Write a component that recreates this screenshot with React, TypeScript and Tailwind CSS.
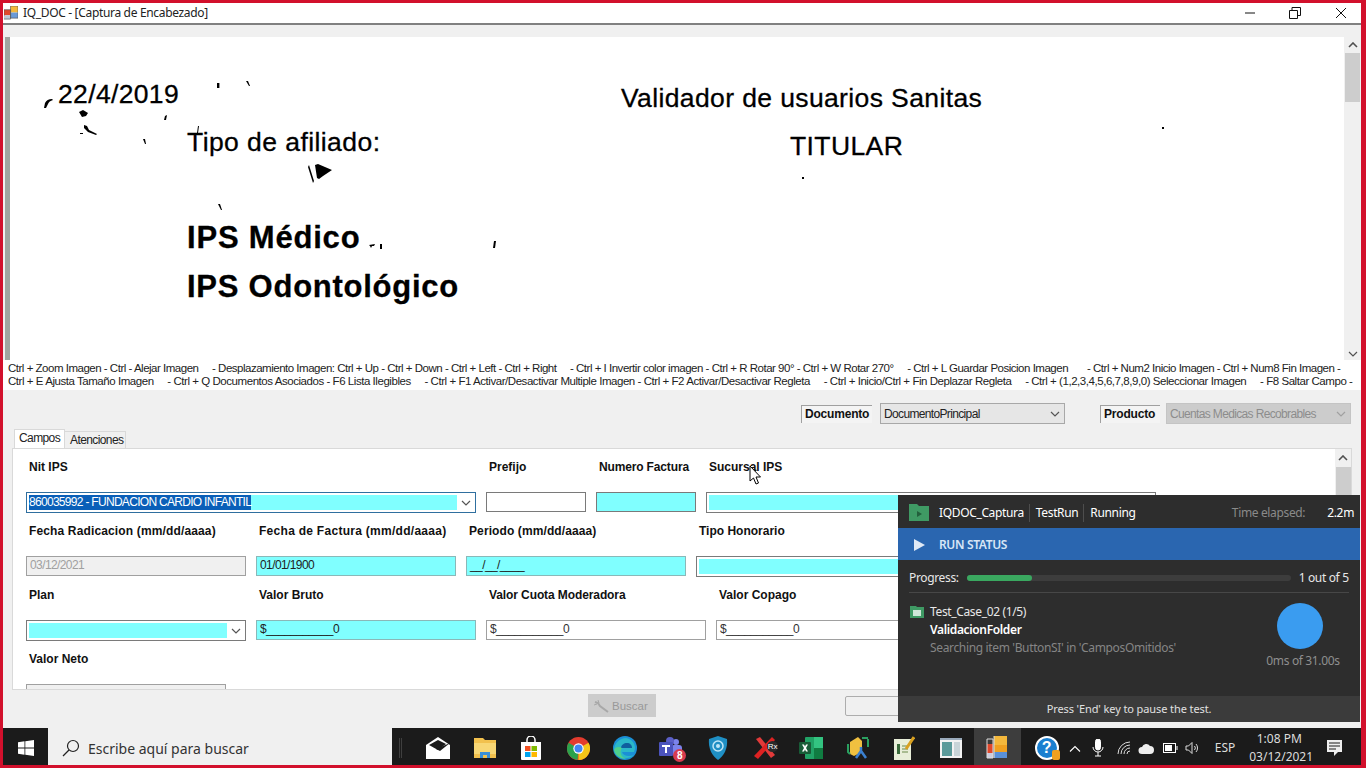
import React from "react";

const sans = "font-['Liberation_Sans',Arial,sans-serif]";

function Label({ w, track = "", children }: { w: string; track?: string; children: React.ReactNode }) {
  return <div className={`${w} ${track} shrink-0 pl-[3px] text-[12px] font-bold leading-[14px] text-[#111]`}>{children}</div>;
}

function Field({ w, cyan, gray, border = "border-[#7a7a7a]", children }: { w: string; cyan?: boolean; gray?: boolean; border?: string; children?: React.ReactNode }) {
  return (
    <div
      className={`${w} h-[20px] shrink-0 border ${border} pl-[3px] text-[12px] leading-[17px] tracking-[-0.6px] whitespace-pre ${
        cyan ? "bg-[#80ffff] text-[#222]" : gray ? "bg-[#f0f0f0] text-[#a0a0a0]" : "bg-white text-[#333]"
      }`}
    >
      {children}
    </div>
  );
}

function Chevron({ color = "#555" }: { color?: string }) {
  return (
    <svg width="10" height="6" viewBox="0 0 10 6" fill="none" stroke={color} strokeWidth="1.2">
      <path d="M1 1l4 4 4-4" />
    </svg>
  );
}

function ComboCyan({ w, fill, border, children }: { w: string; fill: string; border: string; children?: React.ReactNode }) {
  return (
    <div className={`${w} h-[21px] shrink-0 border ${border} flex items-center bg-white pl-[2px]`}>
      <div className={`${fill} h-[15px] bg-[#80ffff] text-[12px] leading-[15px] tracking-[-0.7px] whitespace-pre`}>{children}</div>
      <div className="flex flex-1 justify-center">
        <Chevron />
      </div>
    </div>
  );
}

function TaskIcon({ active, children }: { active?: boolean; children: React.ReactNode }) {
  return <div className={`flex h-full w-[46.6px] shrink-0 items-center justify-center pt-[3px] ${active ? "bg-[#3d3d3d]" : ""}`}>{children}</div>;
}

function Specks() {
  // marcas de ruido del documento escaneado (x absoluta, y - 37)
  return (
    <svg className="absolute left-[-10px] top-0" width="1200" height="260" viewBox="0 0 1200 260" fill="#000">
      <path d="M44 71l1-5q2-4 7-4l1 1q-4 1-5 4l-2 4z" />
      <path d="M79 75l4-2 5 3-2 3-4 1z" />
      <path d="M84 88l3 1 2 4 8 4-1 1-8-3-4-4zM80 96h3v1h-3z" />
      <rect x="217" y="46" width="2.4" height="5" />
      <path d="M246 44l2 0 2 5-1 0z" />
      <path d="M165 79l2-1-1 5h-2z" />
      <path d="M143 102l2 0 1 5-1 0z" />
      <path d="M197 96l1-7 1 0-1 7z" />
      <path d="M308 130l1-2 5 16-1 2z" />
      <path d="M315 128l3-1 14 6-9 6-4 3-2-1z" />
      <path d="M218 167l2 0 2 6-1 0z" />
      <path d="M369 208l6-1-1 2-2 0-1 2-1-2zM380 207h2v5h-2z" />
      <path d="M494 204l2 0-1 7h-2z" />
      <rect x="1162" y="90" width="2" height="2" />
      <rect x="802" y="140" width="2" height="2" />
    </svg>
  );
}

export default function App() {
  return (
    <div className={`${sans} relative flex h-[768px] w-[1366px] flex-col overflow-hidden border-[3px] border-[#d2102c] bg-[#f0f0f0] border-r-[5px]`}>
      {/* barra de titulo */}
      <div className="flex h-[20px] shrink-0 items-center bg-white pb-[1px] pl-[1px]">
        <svg width="14" height="14" viewBox="0 0 15 15" className="mr-[5px]">
          <rect x="7" y="0" width="8" height="7" fill="#f4b83c" />
          <rect x="0" y="4" width="7" height="6" fill="#e0482c" />
          <rect x="7" y="7" width="8" height="6" fill="#6a9ad8" />
          <rect x="1" y="10" width="6" height="4" fill="#b9c7d8" />
          <path d="M0 4h7v10H0zM7 0h8v13H7z" fill="none" stroke="#555" strokeWidth=".7" />
        </svg>
        <span className="font-['Noto_Sans',sans-serif] text-[12px] tracking-[-0.33px] text-[#222]">IQ_DOC - [Captura de Encabezado]</span>
        <div className="ml-auto flex items-center">
          <svg width="12" height="12" viewBox="0 0 12 12" className="mr-[33px]"><path d="M1 6h10" stroke="#111" /></svg>
          <svg width="12" height="12" viewBox="0 0 12 12" className="mr-[34px]" fill="none" stroke="#111"><path d="M.5 3.5h8v8h-8zM3 3.5V.5h8.5v8H8.5" /></svg>
          <svg width="12" height="12" viewBox="0 0 12 12" className="mr-[14px]" stroke="#111"><path d="M1 1l10 10M11 1L1 11" /></svg>
        </div>
      </div>
      <div className="h-[2px] shrink-0 bg-[#808080]" />
      <div className="h-[12px] shrink-0 bg-[#f0f0f0]" />

      {/* imagen escaneada */}
      <div className="flex h-[323px] shrink-0 bg-white">
        <div className="h-full w-[2px] bg-[#f0f0f0]" />
        <div className="h-full w-[5px] bg-[#a0a5a0]" />
        <div className="relative flex-1 overflow-hidden text-black [-webkit-text-stroke:0.3px_#000]">
          <Specks />
          <span className="absolute left-[48px] top-[42px] text-[26.5px] leading-[30px] tracking-[0.35px]">22/4/2019</span>
          <span className="absolute left-[177px] top-[90px] text-[26.5px] leading-[30px] tracking-[0.43px]">Tipo de afiliado:</span>
          <span className="absolute left-[611px] top-[46px] text-[26.5px] leading-[30px] tracking-[0.38px]">Validador de usuarios Sanitas</span>
          <span className="absolute left-[780px] top-[94px] text-[26.5px] leading-[30px] tracking-[0.4px]">TITULAR</span>
          <span className="absolute left-[177px] top-[183px] text-[31px] font-bold leading-[36px] tracking-[0.8px]">IPS Médico</span>
          <span className="absolute left-[177px] top-[232px] text-[31px] font-bold leading-[36px] tracking-[0.75px]">IPS Odontológico</span>
        </div>
        <div className="flex h-full w-[17px] flex-col items-center bg-[#f0f0f0]">
          <div className="flex h-[16px] items-center">
            <svg width="10" height="6" viewBox="0 0 10 6" fill="none" stroke="#505050" strokeWidth="1.6"><path d="M1 5l4-4 4 4" /></svg>
          </div>
          <div className="h-[49px] w-[15px] bg-[#cdcdcd]" />
          <div className="mt-auto flex h-[12px] items-center">
            <Chevron color="#505050" />
          </div>
        </div>
      </div>

      {/* atajos */}
      <div className="h-[30px] shrink-0 overflow-hidden bg-white pl-[5px] pt-[2px] text-[11.5px] leading-[13px] text-[#222] whitespace-pre">
        <div className="tracking-[-0.49px]">{"Ctrl + Zoom Imagen - Ctrl - Alejar Imagen     - Desplazamiento Imagen: Ctrl + Up - Ctrl + Down - Ctrl + Left - Ctrl + Right     - Ctrl + I Invertir color imagen - Ctrl + R Rotar 90° - Ctrl + W Rotar 270°     - Ctrl + L Guardar Posicion Imagen       - Ctrl + Num2 Inicio Imagen - Ctrl + Num8 Fin Imagen -"}</div>
        <div className="tracking-[-0.45px]">{"Ctrl + E Ajusta Tamaño Imagen     - Ctrl + Q Documentos Asociados - F6 Lista Ilegibles     - Ctrl + F1 Activar/Desactivar Multiple Imagen - Ctrl + F2 Activar/Desactivar Regleta     - Ctrl + Inicio/Ctrl + Fin Deplazar Regleta     - Ctrl + (1,2,3,4,5,6,7,8,9,0) Seleccionar Imagen     - F8 Saltar Campo -"}</div>
      </div>

      {/* documento / producto */}
      <div className="flex h-[39px] shrink-0 items-start bg-[#f0f0f0] pl-[798px] pt-[13px]">
        <div className="mt-[2px] h-[18px] w-[71px] border-l border-t border-[#a0a0a0] bg-[#f4f4f4] pl-[3px] text-[12px] font-bold leading-[17px] tracking-[-0.2px] text-[#111]">Documento</div>
        <div className="ml-[8px] flex h-[21px] w-[185px] items-center justify-between border border-[#a8a8a8] bg-[#e6e6e6] pl-[3px] pr-[4px] text-[12px] tracking-[-0.65px] text-[#222]">
          DocumentoPrincipal
          <Chevron />
        </div>
        <div className="ml-[35px] mt-[2px] h-[18px] w-[60px] border-l border-t border-[#a0a0a0] bg-[#f4f4f4] pl-[3px] text-[12px] font-bold leading-[17px] tracking-[-0.2px] text-[#111]">Producto</div>
        <div className="ml-[6px] flex h-[21px] w-[185px] items-center justify-between border border-[#c4c4c4] bg-[#cccccc] pl-[3px] pr-[4px] text-[12px] tracking-[-0.65px] text-[#8c8c8c]">
          Cuentas Medicas Recobrables
          <Chevron color="#a0a0a0" />
        </div>
      </div>

      {/* pestañas */}
      <div className="flex h-[19px] shrink-0 items-end bg-[#f0f0f0] pl-[11px]">
        <div className="h-[19px] w-[51px] border-x border-t border-[#d9d9d9] bg-white pl-[4px] text-[12px] leading-[17px] tracking-[-0.6px] text-[#222]">Campos</div>
        <div className="h-[17px] w-[61px] border-r border-t border-[#d9d9d9] bg-[#f0f0f0] pl-[5px] text-[12px] leading-[16px] tracking-[-0.6px] text-[#222]">Atenciones</div>
      </div>

      {/* panel de campos */}
      <div className="ml-[9px] mr-[9px] flex h-[242px] shrink-0 overflow-hidden border border-[#d9d9d9] bg-white">
        <div className="flex-1 overflow-hidden pl-[13px] pt-[11px]">
          <div className="flex h-[32px] gap-[10px]">
            <Label w="w-[450px]">Nit IPS</Label>
            <Label w="w-[100px]">Prefijo</Label>
            <Label w="w-[100px]" track="tracking-[-0.15px] whitespace-nowrap">Numero Factura</Label>
            <Label w="w-[450px]">Sucursal IPS</Label>
          </div>
          <div className="flex h-[32px] gap-[10px]">
            <ComboCyan w="w-[450px]" fill="w-[428px]" border="border-[#2f6f9f]">
              <span className="inline-block h-[15px] bg-[#0a5fb8] text-white">860035992 - FUNDACION CARDIO INFANTIL</span>
            </ComboCyan>
            <Field w="w-[100px]" />
            <Field w="w-[100px]" cyan />
            <ComboCyan w="w-[450px]" fill="w-[428px]" border="border-[#7a7a7a]" />
          </div>
          <div className="flex h-[32px] gap-[10px]">
            <Label w="w-[220px]" track="tracking-[0.14px]">Fecha Radicacion (mm/dd/aaaa)</Label>
            <Label w="w-[200px]" track="tracking-[0.28px] whitespace-nowrap">Fecha de Factura (mm/dd/aaaa)</Label>
            <Label w="w-[220px]" track="tracking-[0.1px]">Periodo (mm/dd/aaaa)</Label>
            <Label w="w-[220px]">Tipo Honorario</Label>
          </div>
          <div className="flex h-[32px] gap-[10px]">
            <Field w="w-[220px]" gray border="border-[#a0a0a0]">03/12/2021</Field>
            <Field w="w-[200px]" cyan border="border-[#8ab8b8]">01/01/1900</Field>
            <Field w="w-[220px]" cyan border="border-[#8ab8b8]">__/__/____</Field>
            <ComboCyan w="w-[300px]" fill="w-[280px]" border="border-[#7a7a7a]" />
          </div>
          <div className="flex h-[32px] gap-[10px]">
            <Label w="w-[220px]">Plan</Label>
            <Label w="w-[220px]">Valor Bruto</Label>
            <Label w="w-[220px]" track="tracking-[-0.1px]">Valor Cuota Moderadora</Label>
            <Label w="w-[220px]">Valor Copago</Label>
          </div>
          <div className="flex h-[32px] gap-[10px]">
            <ComboCyan w="w-[220px]" fill="w-[198px]" border="border-[#7a7a7a]" />
            <Field w="w-[220px]" cyan border="border-[#8ab8b8]">$___________0</Field>
            <Field w="w-[220px]" border="border-[#a0a0a0]">$___________0</Field>
            <Field w="w-[220px]" border="border-[#a0a0a0]">$___________0</Field>
          </div>
          <div className="flex h-[32px]">
            <Label w="w-[220px]">Valor Neto</Label>
          </div>
          <Field w="w-[200px]" gray border="border-[#a0a0a0]" />
        </div>
        <div className="flex w-[16px] shrink-0 flex-col items-center bg-[#f0f0f0]">
          <div className="flex h-[18px] items-center">
            <svg width="10" height="6" viewBox="0 0 10 6" fill="none" stroke="#505050" strokeWidth="1.6"><path d="M1 5l4-4 4 4" /></svg>
          </div>
          <div className="h-[60px] w-[15px] bg-[#cdcdcd]" />
        </div>
      </div>

      {/* botones */}
      <div className="flex h-[38px] shrink-0 items-start bg-[#f0f0f0] pl-[585px] pt-[4px]">
        <div className="flex h-[23px] w-[68px] items-center bg-[#cccccc] pl-[4px] pt-[3px] text-[11.5px] text-[#999]">
          <svg width="20" height="16" viewBox="0 0 20 16" fill="none" stroke="#a8a8a8" strokeWidth="2" className="-mt-[3px]"><path d="M3 4l3 1 2 3 8 6" /><path d="M2 7l3-1M6 2l1 3" strokeWidth="1" /></svg>
          Buscar
        </div>
        <div className="ml-[189px] mt-[2px] h-[20px] w-[80px] rounded-[2px] border border-[#adadad] bg-[#f0f0f0]" />
      </div>

      {/* barra de tareas */}
      <div className="flex h-[37px] shrink-0 items-center bg-[#1b1b1b]">
        <div className="flex h-full w-[45px] items-center justify-center pt-[3px]">
          <svg width="16" height="16" viewBox="0 0 16 16" fill="#fff"><path d="M0 2.2l6.5-.9v6.3H0zM7.3 1.2L16 0v7.6H7.3zM0 8.4h6.5v6.3L0 13.8zM7.3 8.4H16V16l-8.7-1.2z" /></svg>
        </div>
        <div className="flex h-full w-[344px] items-center bg-[#f0f0f0] pl-[14px] pt-[3px]">
          <svg width="18" height="18" viewBox="0 0 18 18" fill="none" stroke="#222" strokeWidth="1.2"><circle cx="11" cy="7" r="5.5" /><path d="M7 11l-6 6" /></svg>
          <span className="ml-[8px] font-['Noto_Sans',sans-serif] text-[14px] text-[#333]">Escribe aquí para buscar</span>
        </div>
        <div className="ml-[7px] mr-[13px] mt-[3px] h-[20px] w-[3px] border-x border-[#3f3f3f]" />
        <TaskIcon>
          <svg width="24" height="22" viewBox="0 0 24 22"><path d="M0 8L12 0l12 8v14H0z" fill="#fff" /><path d="M3 8l9-5 8 4-8 6z" fill="#1b1b1b" /><path d="M24 6L10 12l4 2z" fill="#1b1b1b" /></svg>
        </TaskIcon>
        <TaskIcon>
          <svg width="22" height="20" viewBox="0 0 22 20"><path d="M0 0h9l2 2h11v18H0z" fill="#f2c14e" /><rect x="0" y="5" width="22" height="11" fill="#f8d775" /><path d="M6 20v-6h10v6h-3v-3H9v3z" fill="#3b8fd6" /></svg>
        </TaskIcon>
        <TaskIcon>
          <svg width="22" height="24" viewBox="0 0 22 24"><path d="M1 6h20v17a1 1 0 01-1 1H2a1 1 0 01-1-1z" fill="#fff" /><path d="M7 6V4a4 4 0 018 0v2" fill="none" stroke="#fff" strokeWidth="1.5" /><rect x="5" y="10" width="5.5" height="5" fill="#f25022" /><rect x="11.5" y="10" width="5.5" height="5" fill="#7fba00" /><rect x="5" y="16" width="5.5" height="5" fill="#00a4ef" /><rect x="11.5" y="16" width="5.5" height="5" fill="#ffb900" /></svg>
        </TaskIcon>
        <TaskIcon>
          <svg width="23" height="23" viewBox="0 0 24 24"><circle cx="12" cy="12" r="12" fill="#e33b2e" /><path d="M12 12L22.4 6A12 12 0 0112 24z" fill="#f5c518" /><path d="M12 12l-1 12A12 12 0 011.6 6z" fill="#2ba24c" /><circle cx="12" cy="12" r="5.4" fill="#fff" /><circle cx="12" cy="12" r="4.2" fill="#4285f4" /></svg>
        </TaskIcon>
        <TaskIcon>
          <svg width="24" height="24" viewBox="0 0 24 24"><circle cx="12" cy="12" r="12" fill="#1b8fd6" /><path d="M1 14C3 20 12 26 21 19c-5 2-11 1-12-3h12c3-6-1-13-8-14C7 2 1 7 1 14z" fill="#2bb8c9" /><path d="M8 12c0-3 3-5 6-5s5 2 5 5z" fill="#0f5f9e" /><path d="M1 14c1 6 7 9 12 9-5-2-7-7-4-11C6 10 2 11 1 14z" fill="#4fd08c" /></svg>
        </TaskIcon>
        <TaskIcon>
          <div className="relative h-[24px] w-[24px]">
            <svg width="24" height="24" viewBox="0 0 24 24"><circle cx="17" cy="6" r="3" fill="#7b83eb" /><circle cx="11" cy="5" r="4" fill="#5b5fc7" /><rect x="12" y="9" width="11" height="10" rx="3" fill="#7b83eb" /><rect x="0" y="6" width="14" height="14" rx="1" fill="#4b53bc" /><path d="M3 9h8v2H8v6H6v-6H3z" fill="#fff" /></svg>
            <span className="absolute bottom-[-2px] right-[-3px] flex h-[13px] w-[13px] items-center justify-center rounded-full bg-[#d83b4f] text-[10px] font-bold leading-none text-white">8</span>
          </div>
        </TaskIcon>
        <TaskIcon>
          <svg width="20" height="24" viewBox="0 0 20 24"><path d="M1 3l9-3 9 3c1 9-3 17-9 21C4 20 0 12 1 3z" fill="#1f8fc4" /><circle cx="10" cy="10" r="5" fill="none" stroke="#bfe6f7" strokeWidth="1.5" /><circle cx="10" cy="10" r="2" fill="#bfe6f7" /></svg>
        </TaskIcon>
        <TaskIcon>
          <div className="relative h-[22px] w-[22px]">
            <svg width="22" height="22" viewBox="0 0 22 22"><path d="M3 2l4-2 15 18-4 3z" fill="#e23a3a" /><path d="M19 0l3 3L5 22l-4-3z" fill="#d22" /></svg>
            <span className="absolute right-[-3px] top-[4px] rounded-full bg-[#2a2a2a] px-[1px] text-[8px] leading-[11px] text-white">Rx</span>
          </div>
        </TaskIcon>
        <TaskIcon>
          <svg width="24" height="22" viewBox="0 0 24 22"><rect x="6" width="18" height="22" rx="1" fill="#21a366" /><rect x="15" width="9" height="11" fill="#33c481" /><rect x="15" y="11" width="9" height="11" fill="#107c41" /><rect y="5" width="12" height="12" rx="1" fill="#185c37" /><path d="M3 7.5h2l1 2 1-2h2l-2 3.5 2 3.5H7l-1-2-1 2H3l2-3.5z" fill="#fff" /></svg>
        </TaskIcon>
        <TaskIcon>
          <svg width="24" height="24" viewBox="0 0 24 24"><path d="M4 6l8-5 4 4v11l-8 4-4-2z" fill="#f0c040" /><path d="M2 8v8l2 2M22 3v8M16 2h6" stroke="#2aa060" strokeWidth="2" fill="none" /><path d="M10 22l5-7 5 7M15 11v5" stroke="#3b80d0" strokeWidth="2.5" fill="none" /></svg>
        </TaskIcon>
        <TaskIcon>
          <svg width="22" height="24" viewBox="0 0 22 24"><rect x="1" y="3" width="17" height="21" fill="#e8eed8" /><rect x="4" y="8" width="3" height="10" fill="#3a6a3a" /><path d="M9 10h6M9 13h6M9 16h6" stroke="#6a8a4a" /><path d="M13 13L21 1" stroke="#d8a020" strokeWidth="3" /></svg>
        </TaskIcon>
        <TaskIcon>
          <svg width="22" height="20" viewBox="0 0 22 20"><rect width="22" height="20" fill="#f2f2f2" /><rect x="2" y="4" width="10" height="14" fill="#5a9a9a" /><rect x="14" y="4" width="6" height="14" fill="#c8d4d8" /><rect width="22" height="2" fill="#9ab" /></svg>
        </TaskIcon>
        <TaskIcon active>
          <svg width="22" height="24" viewBox="0 0 22 24"><rect x="8" y="0" width="13" height="9" fill="#f4b83c" /><rect x="8" y="9" width="13" height="7" fill="#f0a020" /><rect x="1" y="8" width="6" height="9" fill="#e0482c" /><rect x="8" y="16" width="13" height="6" fill="#5a90d8" /><rect x="1" y="17" width="6" height="5" fill="#ccd" /><path d="M1 3h6v19H1zM8 0v22" fill="none" stroke="#ddd" /></svg>
        </TaskIcon>
        <div className="flex h-full flex-1 items-center pl-[14px] pt-[3px] text-white">
          <div className="relative h-[24px] w-[24px]">
            <div className="h-[24px] w-[24px] rounded-full border-[2px] border-white bg-[#1a7fd0] text-center text-[16px] font-bold leading-[20px]">?</div>
            <div className="absolute bottom-0 right-[-1px] h-[10px] w-[8px] rounded-[2px] bg-[#f0a020]" />
          </div>
          <svg width="12" height="7" viewBox="0 0 12 7" fill="none" stroke="#fff" strokeWidth="1.1" className="ml-[10px]"><path d="M1 6.5l5-5 5 5" /></svg>
          <svg width="12" height="18" viewBox="0 0 12 18" className="ml-[11px]" fill="none" stroke="#fff"><rect x="3.5" y="0" width="5" height="11" rx="2.5" fill="#fff" /><path d="M1 8a5 5 0 0010 0M6 13v4M3 17h6" /></svg>
          <svg width="14" height="14" viewBox="0 0 14 14" className="ml-[13px]" fill="none" stroke="#ddd"><path d="M1 13A12 12 0 0113 1M4 13a9 9 0 019-9M7 13a6 6 0 016-6M10 13a3 3 0 013-3" /></svg>
          <svg width="16" height="11" viewBox="0 0 16 11" className="ml-[7px]" fill="#eee"><path d="M4 11a3.5 3.5 0 010-7 4.5 4.5 0 018-1 4 4 0 010 8z" /></svg>
          <svg width="15" height="10" viewBox="0 0 15 10" className="ml-[9px]" fill="none" stroke="#fff"><rect x=".5" y=".5" width="12" height="9" /><rect x="2" y="2" width="7" height="6" fill="#fff" stroke="none" /><path d="M14 3v4" /></svg>
          <svg width="15" height="14" viewBox="0 0 15 14" className="ml-[7px]" fill="none" stroke="#ddd"><path d="M1 5h2.5L7 1.5v11L3.5 9H1zM9.5 5a3 3 0 010 4M11 3a6 6 0 010 8" /></svg>
          <span className="ml-[15px] font-['Noto_Sans',sans-serif] text-[12px] text-[#ddd]">ESP</span>
          <div className="ml-[14px] w-[60px] text-center font-['Noto_Sans',sans-serif] text-[12px] leading-[18px] text-[#ddd]">
            <div>1:08 PM</div>
            <div className="whitespace-nowrap">03/12/2021</div>
          </div>
          <svg width="17" height="16" viewBox="0 0 17 16" className="ml-[17px]" fill="#eee"><path d="M1 0h15v12h-4l-4 4v-4H1z" /><path d="M3 3h11M3 6h11M3 9h7" stroke="#1b1b1b" /></svg>
        </div>
      </div>

      {/* ventana flotante de la prueba */}
      <div className="absolute left-[895px] top-[492px] flex h-[227px] w-[462px] flex-col bg-[#2d2d2d] font-['Noto_Sans',sans-serif] text-[12px] tracking-[-0.35px] text-white">
        <div className="flex h-[33px] shrink-0 items-center pl-[11px] pt-[2px]">
          <svg width="20" height="17" viewBox="0 0 20 17"><path d="M0 0h8l2 2h10v15H0z" fill="#3f9a64" /><path d="M8 7l5 3-5 3z" fill="#23603c" /></svg>
          <span className="ml-[10px]">IQDOC_Captura</span>
          <span className="ml-[5px] border-l border-[#4d4d4d] pl-[6px]">TestRun</span>
          <span className="ml-[5px] border-l border-[#4d4d4d] pl-[6px]">Running</span>
          <span className="ml-auto text-[#8a8a8a]">Time elapsed:</span>
          <span className="ml-[22px] mr-[6px]">2.2m</span>
        </div>
        <div className="flex h-[32px] shrink-0 items-center bg-[#2a66b0] pl-[15px] pt-[1px]">
          <svg width="12" height="12" viewBox="0 0 12 12" fill="#dfe9f5"><path d="M1 0l11 6-11 6z" /></svg>
          <span className="ml-[14px] font-semibold text-[#d8e6f6]">RUN STATUS</span>
        </div>
        <div className="mx-[11px] flex h-[33px] shrink-0 items-center border-b border-[#474747] pt-[3px]">
          <span className="text-[#e8e8e8]">Progress:</span>
          <div className="ml-[8px] h-[6px] w-[324px] rounded-full bg-[#3d3d3d]">
            <div className="h-full w-[65px] rounded-full bg-[#3aa860]" />
          </div>
          <span className="ml-[8px] whitespace-nowrap text-[#e8e8e8]">1 out of 5</span>
        </div>
        <div className="flex flex-1 pl-[12px] pt-[10px]">
          <svg width="14" height="12" viewBox="0 0 14 12" className="mt-[3px]"><path d="M0 0h6l1 1h7v11H0z" fill="#3f9a64" /><rect x="3" y="4" width="8" height="6" fill="#cfe6d8" /></svg>
          <div className="ml-[6px] w-[310px] leading-[18px]">
            <div className="text-[#e8e8e8]">Test_Case_02 (1/5)</div>
            <div className="font-semibold">ValidacionFolder</div>
            <div className="text-[#858585]">Searching item 'ButtonSI' in 'CamposOmitidos'</div>
          </div>
          <div className="ml-[27px] flex w-[72px] flex-col items-center">
            <div className="mr-[7px] h-[46px] w-[46px] rounded-full bg-[#3a9cf0]" />
            <div className="mt-[3px] whitespace-nowrap text-[#8f8f8f]">0ms of 31.00s</div>
          </div>
        </div>
        <div className="flex h-[26px] shrink-0 items-center justify-center bg-[#3b3b3b] text-[11px] tracking-[-0.1px] text-[#e0e0e0]">Press 'End' key to pause the test.</div>
      </div>

      {/* cursor */}
      <svg className="absolute left-[746px] top-[462px]" width="13" height="20" viewBox="0 0 13 20">
        <path d="M1 1v15l3.5-3 2.5 6 2.5-1-2.5-6h4.5z" fill="#fff" stroke="#000" />
      </svg>
    </div>
  );
}
